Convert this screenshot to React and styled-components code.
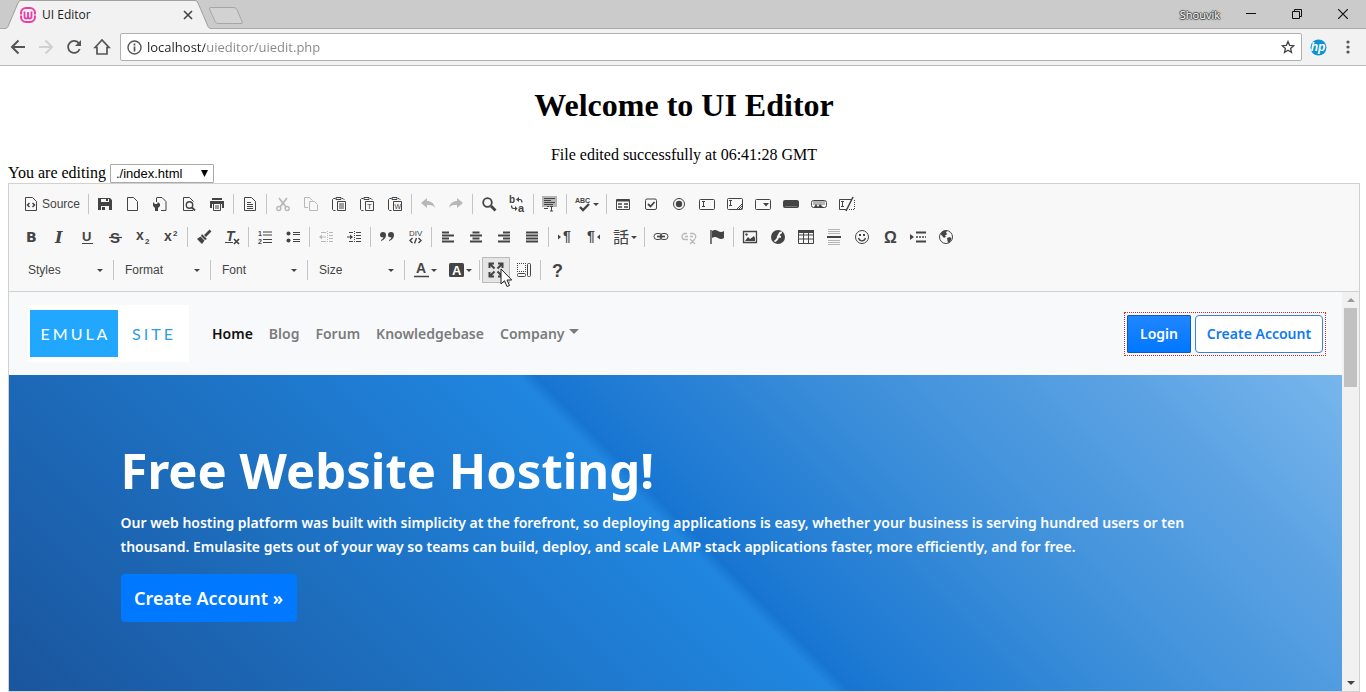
import { useState } from "react";
import styled, { createGlobalStyle, css } from "styled-components";

const GlobalStyle = createGlobalStyle`
  * {
    box-sizing: border-box;
  }
  body {
    margin: 0;
    background: #fff;
    color: #000;
    font-family: "Liberation Serif", serif;
    font-size: 16px;
  }
  button {
    font: inherit;
    color: inherit;
    background: none;
    border: 0;
    padding: 0;
  }
  svg {
    display: block;
    flex: none;
  }
`;

const Screen = styled.div`
  display: flex;
  flex-direction: column;
  min-height: 100vh;
`;

/* browser window */

const TabStrip = styled.div`
  display: flex;
  align-items: flex-end;
  height: 29px;
  padding-left: 5px;
  background: #cbcbcb;
  border-bottom: 1px solid #a9a9a9;
  font-family: "Open Sans", sans-serif;
`;
const Tab = styled.div`
  position: relative;
  display: flex;
  align-items: center;
  width: 206px;
  height: 29px;
  margin-bottom: -1px;
  padding: 0 16px 0 15px;
  font-size: 12px;
`;
const TabShape = styled.svg`
  position: absolute;
  left: 0;
  top: 0;
`;
const TabTitle = styled.span`
  position: relative;
  flex: 1;
  padding-left: 6px;
  color: #222;
`;
const TabIcon = styled.span`
  position: relative;
`;
const TabClose = styled.button`
  position: relative;
`;
const NewTab = styled.button`
  align-self: flex-start;
  margin: 6px auto 0 -3px;
`;
const UserName = styled.button`
  align-self: center;
  margin-right: 8px;
  font-size: 11px;
  color: #fff;
  text-shadow: 1px 0 1px #444, -1px 0 1px #444, 0 1px 1px #444, 0 -1px 1px #444;
`;
const WindowButton = styled.button`
  display: grid;
  place-items: center;
  width: 46px;
  height: 28px;
`;

const AddressRow = styled.div`
  display: flex;
  align-items: center;
  height: 37px;
  padding: 0 4px;
  background: #f2f2f2;
  border-bottom: 1px solid #b9b9b9;
`;
const NavButton = styled.button`
  display: grid;
  place-items: center;
  width: 28px;
  height: 28px;
`;
const Extension = styled.button`
  margin-right: 7px;
`;
const UrlBox = styled.div`
  display: flex;
  align-items: center;
  flex: 1;
  gap: 5px;
  height: 28px;
  margin: 0 8px 0 4px;
  padding: 0 6px;
  background: #fff;
  border: 1px solid #b0b0b0;
  border-radius: 2px;
`;
const UrlInput = styled.input`
  flex: 1;
  padding: 0;
  border: 0;
  outline: 0;
  font-family: "Open Sans", sans-serif;
  font-size: 13px;
  color: transparent;
  background: linear-gradient(to right, #222 58px, #868686 58px);
  -webkit-background-clip: text;
  background-clip: text;
`;

/* page */

const Page = styled.main`
  display: flex;
  flex-direction: column;
  flex: 1;
  padding: 21px 6px 0 8px;
`;
const Heading = styled.h1`
  margin: 0 0 22px;
  font-size: 32px;
  line-height: 37px;
  text-align: center;
`;
const Message = styled.p`
  margin: 0;
  line-height: 18px;
  text-align: center;
`;
const FileRow = styled.div`
  display: flex;
  align-items: flex-start;
  gap: 4px;
  height: 19px;
  line-height: 18px;
`;
const SelectWrap = styled.span`
  display: grid;
  align-items: center;
`;
const FileSelect = styled.select`
  grid-area: 1 / 1;
  appearance: none;
  width: 104px;
  height: 19px;
  padding: 0 5px;
  border: 1px solid #a9a9a9;
  border-radius: 1px;
  background: #fff;
  color: #000;
  font-family: "Liberation Sans", sans-serif;
  font-size: 13px;
`;
const SelectArrow = styled.svg`
  grid-area: 1 / 1;
  justify-self: end;
  margin-right: 6px;
  pointer-events: none;
`;

/* editor */

const Editor = styled.section`
  display: flex;
  flex-direction: column;
  flex: 1;
  border: 1px solid #d1d1d1;
`;
const Toolbar = styled.div`
  display: flex;
  flex-direction: column;
  gap: 7px;
  padding: 7px 8px 8px;
  background: #f8f8f8;
  border-bottom: 1px solid #d1d1d1;
  color: #444;
  font-family: "Liberation Sans", sans-serif;
  font-size: 12px;
`;
const ToolRow = styled.div`
  display: flex;
  height: 26px;
`;
const Tool = styled.button`
  position: relative;
  display: flex;
  align-items: center;
  justify-content: center;
  gap: 2px;
  width: ${props => (props.$wide ? "35px" : "28px")};
  opacity: ${props => (props.disabled ? 0.35 : 1)};
  color: #444;
  ${props => props.$on && css`
    background: #e5e5e5;
    border: 1px solid #bcbcbc;
  `}
`;
const SourceTool = styled(Tool)`
  width: auto;
  padding: 0 6px;
  gap: 3px;
`;
const Separator = styled.span`
  width: 1px;
  height: 20px;
  margin: 3px 2px;
  background: #c4c4c4;
`;
const Combo = styled.button`
  display: flex;
  align-items: center;
  justify-content: space-between;
  width: 92px;
  padding: 0 8px 0 9px;
  &:first-child {
    margin-left: 2px;
  }
`;
const Pointer = styled.svg`
  position: absolute;
  left: 17px;
  top: 10px;
  z-index: 1;
`;

/* edited site */

const Frame = styled.div`
  display: flex;
  flex: 1;
`;
const Site = styled.div`
  display: flex;
  flex-direction: column;
  flex: 1;
  font-family: "Noto Sans", sans-serif;
  font-weight: 600;
`;
const Navbar = styled.nav`
  display: flex;
  align-items: center;
  height: 83px;
  padding: 0 16px 0 19px;
  background: #f8f9fa;
`;
const Logo = styled.a`
  display: flex;
  align-items: stretch;
  height: 57px;
  margin-right: 23px;
  padding: 5px 2px;
  background: #fff;
  font-family: Lato, sans-serif;
  font-size: 16px;
  font-weight: normal;
  letter-spacing: 3px;
  text-decoration: none;
`;
const LogoPart = styled.span`
  display: grid;
  place-items: center;
  width: ${props => (props.$filled ? "88px" : "69px")};
  padding-left: 3px;
  background: ${props => (props.$filled ? "#22a7ff" : "#fff")};
  color: ${props => (props.$filled ? "#fff" : "#2e9be6")};
`;
const Links = styled.div`
  display: flex;
  gap: 16px;
  flex: 1;
`;
const NavLink = styled.a`
  display: flex;
  align-items: center;
  gap: 4px;
  color: ${props => (props.$active ? "#111" : "#7b7c7d")};
  font-size: 14px;
  text-decoration: none;
`;
const Account = styled.div`
  display: flex;
  gap: 4px;
  padding: 2px;
  border: 1px dotted #e02020;
`;
const SiteButton = styled.a`
  display: grid;
  place-items: center;
  width: ${props => (props.$outline ? "128px" : "64px")};
  height: 38px;
  border: 1px solid ${props => (props.$outline ? "#2f86e0" : "#0b5cc0")};
  border-radius: ${props => (props.$outline ? "4px" : "1px")};
  background: ${props => (props.$outline ? "#fff" : "linear-gradient(#2186ff, #0077ff)")};
  color: ${props => (props.$outline ? "#0f7af0" : "#fff")};
  font-size: 14px;
  text-decoration: none;
`;
const Hero = styled.div`
  flex: 1;
  padding-top: 61px;
  color: #fff;
  background: linear-gradient(45deg, #1a559d 0%, #1d6bba 22%, #2086e0 50%, #1775d1 51%, #3a8dd9 68%, #5ba2e3 86%, #78b6ec 100%);
`;
const HeroInner = styled.div`
  max-width: 1110px;
  margin: 0 auto;
`;
const HeroTitle = styled.h2`
  margin: 0 0 7px;
  font-size: 49px;
  line-height: 68px;
`;
const HeroText = styled.p`
  margin: 0 0 15px;
  font-size: 14px;
  line-height: 24px;
`;
const HeroButton = styled.a`
  display: inline-grid;
  place-items: center;
  width: 176px;
  height: 48px;
  border-radius: 4px;
  background: #0078ff;
  color: #fff;
  font-size: 18px;
  text-decoration: none;
`;
const Scrollbar = styled.div`
  display: flex;
  flex-direction: column;
  align-items: center;
  justify-content: space-between;
  width: 17px;
  background: #f1f1f1;
`;
const ScrollButton = styled.button`
  display: grid;
  place-items: center;
  width: 17px;
  height: 16px;
`;
const Thumb = styled.div`
  width: 13px;
  height: 79px;
  margin-bottom: auto;
  background: #c1c1c1;
`;

const PAGE = "M2.5 1.5h7l4 4v9h-11z";
const CLIP = "M4.5 14.5h-2l-1-1V3.500l1-1h2M11 2.500h1l1 1V4M5 1.500h5v2H5z";

const icons = {
  source: <><path d={PAGE} /><path d="M6.500 7 4.500 9l2 2M9.500 7l2 2-2 2" strokeWidth="1.500" /></>,
  save: <><path className="f" d="M1 2h12l2 2v10H1z" /><path className="w" d="M4 3h8v3H4zM4 10h8v4H4z" /><path className="f" d="M9 3h2v2H9zM5 11h3v3H5z" /></>,
  newPage: <path d="M2.500 1.500h6l4 4v9h-10z" />,
  restore: <><path d="M4 1.500h5l4 4v9H8M3.500 6V1.500" /><path className="f" d="M0 6l2 2h2l1-2 2 2v2l-2 2v3H2v-3L0 10z" /></>,
  preview: <><path d="M12 14.500H2.500v-13h6l4 4" /><circle cx="8.500" cy="9" r="3.200" strokeWidth="1.400" /><path d="m11 11.500 3 3" strokeWidth="1.800" /></>,
  print: <><path className="f" d="M3 2h10v2H3zM1 5h14v7h-2V8H3v4H1z" /><path d="M4.500 8v6.500h7V8M6 10h4M6 12h4" /></>,
  templates: <><path d={PAGE} /><path d="M5 6.500h4M5 8.500h6M5 10.500h6M5 12.500h6" /></>,
  cut: <><path d="m4 2 7 9M12 2l-7 9" strokeWidth="1.800" /><circle cx="3.800" cy="12.500" r="2" strokeWidth="1.400" /><circle cx="12.200" cy="12.500" r="2" strokeWidth="1.400" /></>,
  copy: <><path d="M5 11.500H1.500v-10h5l3 3" /><path d="M6.500 5.500h5l3 3v6h-8z" /></>,
  paste: <><path d={CLIP} /><path d="M6.500 5.500h8v9h-8z" /><path d="M8 8h5M8 10h5M8 12h5" /></>,
  pasteText: <><path d={CLIP} /><path d="M6.500 5.500h8v9h-8z" /><text x="8" y="13" fontSize="8">T</text></>,
  pasteWord: <><path d={CLIP} /><path d="M6.500 5.500h8v9h-8z" /><text x="7.500" y="13" fontSize="7">W</text></>,
  undo: <path className="f" d="M1 7l6-5v3c4 0 7 2 8 7-2-3-4-3-8-3v3z" />,
  redo: <path className="f" d="M15 7 9 2v3c-4 0-7 2-8 7 2-3 4-3 8-3v3z" />,
  find: <><circle cx="6.500" cy="6.500" r="4.300" strokeWidth="1.800" /><path d="m10 10 4.500 4.500" strokeWidth="2.800" /></>,
  replace: <><text x="0" y="7" fontSize="10" fontWeight="bold">b</text><text x="9" y="16" fontSize="11" fontWeight="bold">a</text><path d="M9 3.500h2q2 0 2 3M2.500 9.500q0 3 2 3h2" strokeWidth="1.200" /><path className="f" d="m7 3.500 3-2.500v5zM8.500 12.500 6 10v5z" /></>,
  selectAll: <><path className="l" d="M0 0h15v11H0z" /><path d="M2 2.500h11M2 4.500h7M2 6.500h11M2 8.500h9M5 10.500h2M9.500 11v4M8 10.500h3M8 15h3M2 12.500h4" /></>,
  spell: <><text x="0" y="7" fontSize="7" fontWeight="bold">ABC</text><path d="m5 11 3 3 6-6" strokeWidth="2.400" /></>,
  form: <><path d="M1.500 3.500h13v10h-13z" /><path d="M2 4.500h12" strokeWidth="2" /><path d="M3 8h4M3 11h4M9 8h4M9 11h4" strokeWidth="1.700" /></>,
  checkbox: <><rect x="2.500" y="3" width="11" height="10.500" rx="1.500" /><path d="m5 8 2.500 2.500L11.500 6" strokeWidth="1.800" /></>,
  radio: <><circle cx="8" cy="8" r="5.500" /><circle className="f" cx="8" cy="8" r="3.200" /></>,
  textField: <><rect x=".5" y="3.500" width="15" height="10" rx="1" /><path d="M3 5.500h3M4.500 5.500v5M3 10.500h3" /></>,
  textarea: <><rect x=".5" y="2.500" width="15" height="11" rx="1" /><path d="M2 4.500h3M3.500 4.500v5M2 9.500h3M10 13l5-5M12 13l3-3M14 13l1-1" /></>,
  select: <><rect x=".5" y="3.500" width="15" height="10" rx="1" /><path className="f" d="M8 7h6l-3 3.500z" /></>,
  button: <><rect className="f" x="0" y="4" width="16" height="8" rx="2" /><path d="M2 10.500h12" stroke="#777" /></>,
  imageButton: <><rect x=".5" y="4.500" width="15" height="7" rx="2" /><path className="l" d="M2 5h12v4H2z" /><path className="f" d="M3 11l2-3 2 3 2-3 3 3z" /></>,
  hidden: <><path d="M8 13.500H.5v-10H12M2 5.500h3M3.500 5.500v5M2 10.500h3" /><path d="M7 15 14 1" strokeWidth="1.600" /><path d="M15.500 4v9.500H9" strokeDasharray="1 1" /></>,
  bold: <text x="3" y="13" fontSize="14" fontWeight="bold" fontFamily="DejaVu Sans, sans-serif">B</text>,
  italic: <text x="4" y="14" fontSize="16" fontWeight="bold" fontStyle="italic" fontFamily="DejaVu Serif, serif">I</text>,
  underline: <><text x="3" y="12" fontSize="13" fontWeight="bold">U</text><path d="M3 14.500h11" /></>,
  strike: <><text x="3" y="14" fontSize="15" fontWeight="bold">S</text><path d="M2 8.500h13" strokeWidth="1.300" /></>,
  sub: <><text x="1" y="11" fontSize="14" fontWeight="bold">x</text><text x="10" y="15" fontSize="8" fontWeight="bold">2</text></>,
  sup: <><text x="1" y="12" fontSize="14" fontWeight="bold">x</text><text x="10" y="7" fontSize="8" fontWeight="bold">2</text></>,
  brush: <><path d="m9 7 5.500-5.500" strokeWidth="2.600" /><path className="f" d="m6 5 5 5-2 1-4-4zM4.500 7.500l4 4L6 15l-5-5z" /></>,
  removeFormat: <><text x="2" y="12" fontSize="14" fontWeight="bold" fontStyle="italic">T</text><path d="M1 13.500h8" /><path d="m10 10 5 5M15 10l-5 5" strokeWidth="1.700" /></>,
  numbered: <><path d="M6 3h9M6 6h9M6 10.500h9M6 13.500h9" /><text x="1" y="7" fontSize="7" fontWeight="bold">1</text><text x="1" y="15" fontSize="7" fontWeight="bold">2</text></>,
  bullets: <><circle className="f" cx="3.500" cy="4.500" r="2" /><circle className="f" cx="3.500" cy="11.500" r="2" /><path d="M8 3.500h7M8 5.500h7M8 10.500h7M8 12.500h7" /></>,
  outdent: <><path d="M9.500 2v12" strokeDasharray="1 1" /><path d="M3 3.500h5M3 12.500h5M11 3.500h4M11 6.500h4M11 9.500h4M11 12.500h4M2 8h6" /><path className="f" d="M1 8l3-2.500v5z" /></>,
  indent: <><path d="M8.500 2v12" strokeDasharray="1 1" /><path d="M10 3.500h5M10 6.500h5M10 9.500h5M10 12.500h5M3 3.500h4M3 12.500h4M1 8h5" /><path className="f" d="M7 8 4 5.500v5z" /></>,
  quote: <path className="f" d="M1 6a3 3 0 1 1 6 0q0 4-5 6v-1q2-1 2.500-2.500Q1 8.500 1 6zM9 6a3 3 0 1 1 6 0q0 4-5 6v-1q2-1 2.500-2.500Q9 8.500 9 6z" />,
  div: <><text x="2" y="7" fontSize="8">DIV</text><path d="M5.500 9 3 11.500 5.500 14M9.500 9l-2 5.500M11.500 9l2.500 2.500-2.500 2.500" strokeWidth="1.400" /></>,
  left: <path d="M2 3.500h7M2 6.500h12M2 9.500h7M2 12.500h12" strokeWidth="1.900" />,
  center: <path d="M4.500 3.500h7M2 6.500h12M4.500 9.500h7M2 12.500h12" strokeWidth="1.900" />,
  right: <path d="M7 3.500h7M2 6.500h12M7 9.500h7M2 12.500h12" strokeWidth="1.900" />,
  justify: <path d="M2 3.500h12M2 6.500h12M2 9.500h12M2 12.500h12" strokeWidth="1.900" />,
  ltr: <><path className="f" d="M1 5.500 4 8l-3 2.500z" /><text x="6" y="12" fontSize="14" fontWeight="bold">¶</text></>,
  rtl: <><path className="f" d="M15 5.500 12 8l3 2.500z" /><text x="2" y="12" fontSize="14" fontWeight="bold">¶</text></>,
  language: <text x="0" y="14" fontSize="16" fontFamily="Noto Sans CJK JP, sans-serif">話</text>,
  link: <><rect x="1" y="4.500" width="8" height="6" rx="3" /><rect x="7" y="4.500" width="8" height="6" rx="3" /><path d="M4 7.500h8" strokeWidth="1.600" /></>,
  unlink: <><path d="M6 4.500H4a3 3 0 0 0 0 6h3M9 4.500h3a3 3 0 0 1 2 5M4 7.500h3M9 7.500h3M9 10l5 5M14 10l-5 5" strokeWidth="1.300" /></>,
  anchor: <><path d="M2 1v14" strokeWidth="1.400" /><path className="f" d="M3 2q3-2 6 0t6 0v7q-3 2-6 0T3 9z" /></>,
  image: <><path d="M1.500 2.500h13v11h-13z" strokeWidth="1.300" /><path className="f" d="m3 12 3-4 2 2 4-3 1 2v3z" /><circle className="f" cx="4.500" cy="5.500" r="1.200" /></>,
  flash: <><circle className="f" cx="8" cy="8" r="7" /><path className="cutout" d="M12 3.500Q9.500 3 8.500 7T4.500 12.500M7 7.800h4" strokeWidth="1.900" /></>,
  table: <><path d="M.5 1.500h15v13H.5zM.5 6h15M.5 10h15M5.500 4v10M10.500 4v10" /><path className="f" d="M0 1h16v3H0z" /></>,
  rule: <><path className="l" d="M2 0h12v1H2zM2 2h12v1H2zM2 4h12v1H2zM2 11h12v1H2zM2 13h12v1H2zM2 15h12v1H2z" /><path d="M1 8h14" strokeWidth="2" /></>,
  smiley: <><circle cx="8" cy="8" r="6.500" /><path d="M4.500 9q1 2.800 3.500 2.800T11.500 9" strokeWidth="1.300" /><path className="f" d="M5 5h2v2H5zM9 5h2v2H9z" /></>,
  omega: <text x="2" y="14" fontSize="16" fontWeight="bold">Ω</text>,
  pageBreak: <><path className="f" d="M0 5l4 3-4 3z" /><path d="M6 3.500h10M6 12.500h10" strokeWidth="2" /><path d="M6 8h10" strokeDasharray="2 1" strokeWidth="1.300" /></>,
  globe: <><circle cx="8" cy="8" r="6.500" /><path className="f" d="M2.500 5 5 2l4-.5-1 2.500 1.500 1-2.500 1.500 1 1-2 1.500zM9 9l3-1 1.500 1.500L12 13l-2 1-.5-2.500z" /></>,
  textColor: <><text x="3" y="11" fontSize="14" fontWeight="bold">A</text><path d="M1 14.500h15" strokeWidth="1.500" /></>,
  bgColor: <><rect className="f" x="1" y="1" width="15" height="14" rx="1.500" /><text className="cutout" x="4" y="12.500" fontSize="13" fontWeight="bold">A</text></>,
  maximize: <path d="M1.500 6V1.500H6M10 1.500h4.500V6M14.500 10v4.500H10M6 14.500H1.500V10M2 2l4.500 4.500M14 2 9.500 6.500M14 14 9.500 9.500M2 14l4.500-4.500" strokeWidth="2" />,
  blocks: <><path d="M1 1.500h9M1 9.500h9M1.500 1v9M9.500 1v9" strokeDasharray="1 1" /><rect x="11.500" y="1.500" width="3" height="13" rx="1" /><rect x="1.500" y="11.500" width="8" height="3" rx="1" /></>,
  about: <text x="3" y="15" fontSize="18" fontWeight="bold">?</text>,
};

const Glyph = styled.svg`
  fill: none;
  stroke: #444;
  .f, text {
    fill: #444;
    stroke: none;
  }
  .w {
    fill: #f8f8f8;
    stroke: none;
  }
  .l {
    fill: #b5b5b5;
    stroke: none;
  }
  path.cutout {
    stroke: #f8f8f8;
  }
  text.cutout {
    fill: #fff;
  }
`;

function Icon({ name }) {
  return (
    <Glyph width="16" height="16" viewBox="0 0 16 16" overflow="visible" aria-hidden="true">
      {icons[name]}
    </Glyph>
  );
}

function Caret() {
  return (
    <svg width="6" height="3" viewBox="0 0 6 3">
      <path d="M0 0h6L3 3z" fill="#444" />
    </svg>
  );
}

const disabled = ["cut", "copy", "undo", "redo", "outdent", "unlink"];
const wide = ["spell", "language", "textColor", "bgColor"];

const rowOne = [
  ["save", "newPage", "restore", "preview", "print"],
  ["templates"],
  ["cut", "copy", "paste", "pasteText", "pasteWord"],
  ["undo", "redo"],
  ["find", "replace"],
  ["selectAll"],
  ["spell"],
  ["form", "checkbox", "radio", "textField", "textarea", "select", "button", "imageButton", "hidden"],
];
const rowTwo = [
  ["bold", "italic", "underline", "strike", "sub", "sup"],
  ["brush", "removeFormat"],
  ["numbered", "bullets"],
  ["outdent", "indent"],
  ["quote", "div"],
  ["left", "center", "right", "justify"],
  ["ltr", "rtl", "language"],
  ["link", "unlink", "anchor"],
  ["image", "flash", "table", "rule", "smiley", "omega", "pageBreak", "globe"],
];
const rowThree = [["textColor", "bgColor"], ["maximize", "blocks"], ["about"]];

function ToolGroups({ groups }) {
  return groups.map((group, i) => [
    i > 0 && <Separator key={"sep" + i} />,
    ...group.map(name => (
      <Tool
        key={name}
        type="button"
        aria-label={name}
        disabled={disabled.includes(name)}
        $wide={wide.includes(name)}
        $on={name === "maximize"}
      >
        <Icon name={name} />
        {wide.includes(name) && <Caret />}
        {name === "maximize" && (
          <Pointer width="13" height="20" viewBox="0 0 13 20">
            <path d="M1 1v15l3.500-3.300L7 18.500l2.500-1L7 12h4.800z" fill="#fff" stroke="#222" />
          </Pointer>
        )}
      </Tool>
    )),
  ]);
}

function Browser() {
  const [url, setUrl] = useState("localhost/uieditor/uiedit.php");
  return (
    <header>
      <TabStrip>
        <Tab>
          <TabShape width="206" height="29" viewBox="0 0 206 29">
            <path d="M0 28.500q2 0 3-2L13 3q1-2.500 3-2.500h174q2 0 3 2.500l10 23.500q1 2 3 2V29H0z" fill="#f2f2f2" />
            <path d="M0 28.500q2 0 3-2L13 3q1-2.500 3-2.500h174q2 0 3 2.500l10 23.500q1 2 3 2" fill="none" stroke="#a0a0a0" />
          </TabShape>
          <TabIcon>
            <svg width="16" height="16" viewBox="0 0 16 16" fill="none" stroke="#ee3aa5">
              <rect x="1" y="1" width="14" height="14" rx="5" strokeWidth="2" />
              <path d="M4.500 4.500v5q0 2 1.800 2T8 9.500V5v4.500q0 2 1.800 2t1.700-2v-5" strokeWidth="1.800" />
              <path d="M0 8h2M14 8h2" stroke="#f2f2f2" />
            </svg>
          </TabIcon>
          <TabTitle>UI Editor</TabTitle>
          <TabClose type="button" aria-label="Close tab">
            <svg width="14" height="14" viewBox="0 0 14 14">
              <path d="m3 3 8 8M11 3l-8 8" stroke="#444" strokeWidth="1.600" />
            </svg>
          </TabClose>
        </Tab>
        <NewTab type="button" aria-label="New tab">
          <svg width="36" height="19" viewBox="0 0 36 19">
            <path d="M3 1.500h23q2 0 3 2l5 12q1 2-1 2H10q-2 0-3-2L1.500 3q-.5-1.500 1.500-1.500z" fill="#d2d2d2" stroke="#a6a6a6" />
          </svg>
        </NewTab>
        <UserName type="button">Shouvik</UserName>
        <WindowButton type="button" aria-label="Minimize">
          <svg width="10" height="10"><path d="M0 4.500h10" stroke="#111" /></svg>
        </WindowButton>
        <WindowButton type="button" aria-label="Restore">
          <svg width="10" height="10" fill="none" stroke="#111"><path d="M.5 2.500h7v7h-7zM2.500 2V.5h7v7H8" /></svg>
        </WindowButton>
        <WindowButton type="button" aria-label="Close">
          <svg width="10" height="10"><path d="m0 0 10 10M10 0 0 10" stroke="#111" strokeWidth="1.200" /></svg>
        </WindowButton>
      </TabStrip>
      <AddressRow>
        <NavButton type="button" aria-label="Back">
          <svg width="16" height="16" viewBox="0 0 16 16" fill="none" stroke="#555" strokeWidth="2"><path d="M15 8H2.500M8.500 1.500 2 8l6.500 6.500" /></svg>
        </NavButton>
        <NavButton type="button" aria-label="Forward">
          <svg width="16" height="16" viewBox="0 0 16 16" fill="none" stroke="#d0d0d0" strokeWidth="2"><path d="M1 8h12.500M7.500 1.500 14 8l-6.500 6.500" /></svg>
        </NavButton>
        <NavButton type="button" aria-label="Reload">
          <svg width="16" height="16" viewBox="0 0 16 16"><path d="M13 4.500A6 6 0 1 0 13.700 10" fill="none" stroke="#555" strokeWidth="1.800" /><path d="M15 1v6H9z" fill="#555" /></svg>
        </NavButton>
        <NavButton type="button" aria-label="Home">
          <svg width="18" height="18" viewBox="0 0 18 18" fill="none" stroke="#555" strokeWidth="1.700"><path d="M2 9.500 9 2l7 7.500h-2V16H4V9.500z" /></svg>
        </NavButton>
        <UrlBox>
          <svg width="15" height="15" viewBox="0 0 15 15" fill="none" stroke="#555"><circle cx="7.500" cy="7.500" r="6.500" strokeWidth="1.400" /><path d="M7.500 3.500v2M7.500 6.500v5" strokeWidth="1.700" /></svg>
          <UrlInput aria-label="Address" value={url} onChange={e => setUrl(e.target.value)} />
          <svg width="14" height="14" viewBox="0 0 14 14"><path d="m7 1.500 1.600 3.800 4.100.4-3.100 2.700.9 4L7 10.300l-3.500 2.100.9-4L1.300 5.700l4.100-.4z" fill="none" stroke="#444" strokeWidth="1.300" /></svg>
        </UrlBox>
        <Extension type="button" aria-label="HP">
          <svg width="17" height="17" viewBox="0 0 17 17">
            <circle cx="8.500" cy="8.500" r="8" fill="#0b93d4" />
            <text x="8" y="12" textAnchor="middle" fontSize="12" fontWeight="bold" fontStyle="italic" fontFamily="Liberation Sans, sans-serif" fill="#fff">hp</text>
          </svg>
        </Extension>
        <NavButton type="button" aria-label="Menu">
          <svg width="4" height="14" viewBox="0 0 4 14" fill="#555"><circle cx="2" cy="2" r="1.600" /><circle cx="2" cy="7" r="1.600" /><circle cx="2" cy="12" r="1.600" /></svg>
        </NavButton>
      </AddressRow>
    </header>
  );
}

function EditedSite() {
  return (
    <Frame>
      <Site>
        <Navbar>
          <Logo href="#">
            <LogoPart $filled>EMULA</LogoPart>
            <LogoPart>SITE</LogoPart>
          </Logo>
          <Links>
            <NavLink href="#" $active>Home</NavLink>
            <NavLink href="#">Blog</NavLink>
            <NavLink href="#">Forum</NavLink>
            <NavLink href="#">Knowledgebase</NavLink>
            <NavLink href="#">
              Company
              <svg width="10" height="9" viewBox="0 0 10 9"><path d="M0 0h10L5 5z" fill="#7b7c7d" /></svg>
            </NavLink>
          </Links>
          <Account>
            <SiteButton href="#">Login</SiteButton>
            <SiteButton href="#" $outline>Create Account</SiteButton>
          </Account>
        </Navbar>
        <Hero>
          <HeroInner>
            <HeroTitle>Free Website Hosting!</HeroTitle>
            <HeroText>
              Our web hosting platform was built with simplicity at the forefront, so deploying applications is easy, whether your business is serving hundred users or ten thousand. Emulasite gets out of your way so teams can build, deploy, and scale LAMP stack applications faster, more efficiently, and for free.
            </HeroText>
            <HeroButton href="#">Create Account »</HeroButton>
          </HeroInner>
        </Hero>
      </Site>
      <Scrollbar>
        <ScrollButton type="button" aria-label="Scroll up">
          <svg width="8" height="4"><path d="M0 4h8L4 0z" fill="#999" /></svg>
        </ScrollButton>
        <Thumb />
        <ScrollButton type="button" aria-label="Scroll down">
          <svg width="8" height="4"><path d="M0 0h8L4 4z" fill="#444" /></svg>
        </ScrollButton>
      </Scrollbar>
    </Frame>
  );
}

export default function App() {
  return (
    <Screen>
      <GlobalStyle />
      <Browser />
      <Page>
        <Heading>Welcome to UI Editor</Heading>
        <Message>File edited successfully at 06:41:28 GMT</Message>
        <FileRow>
          <label htmlFor="file">You are editing</label>
          <SelectWrap>
            <FileSelect id="file">
              <option>./index.html</option>
            </FileSelect>
            <SelectArrow width="7" height="7" viewBox="0 0 7 7">
              <path d="M0 0h7L3.500 7z" />
            </SelectArrow>
          </SelectWrap>
        </FileRow>
        <Editor>
          <Toolbar>
            <ToolRow>
              <SourceTool type="button">
                <Icon name="source" />
                Source
              </SourceTool>
              <Separator />
              <ToolGroups groups={rowOne} />
            </ToolRow>
            <ToolRow>
              <ToolGroups groups={rowTwo} />
            </ToolRow>
            <ToolRow>
              {["Styles", "Format", "Font", "Size"].map(name => [
                <Combo type="button" key={name}>
                  {name}
                  <Caret />
                </Combo>,
                <Separator key={name + "sep"} />,
              ])}
              <ToolGroups groups={rowThree} />
            </ToolRow>
          </Toolbar>
          <EditedSite />
        </Editor>
      </Page>
    </Screen>
  );
}
